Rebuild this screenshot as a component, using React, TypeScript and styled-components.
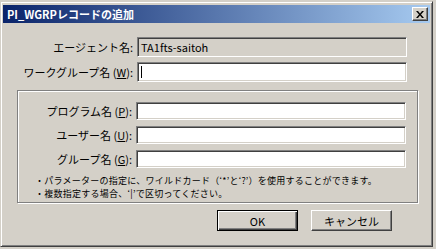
import React from 'react';
import styled, { createGlobalStyle } from 'styled-components';

const GlobalStyle = createGlobalStyle`
  html, body {
    margin: 0;
    padding: 0;
    background: #d4d0c8;
  }
  body {
    font-family: "Noto Sans CJK JP", "Liberation Sans", sans-serif;
    font-size: 11px;
    color: #000;
  }
`;

const Window = styled.div`
  box-sizing: border-box;
  width: 433px;
  height: 246px;
  margin-top: 1px;
  padding: 3px 2px 2px 2px;
  background: #d4d0c8;
  border-style: solid;
  border-width: 1px;
  border-color: #d4d0c8 #404040 #404040 #d4d0c8;
  box-shadow: inset 1px 1px #ffffff, inset -1px -1px #808080;
  display: flex;
  flex-direction: column;
`;

const TitleBar = styled.div`
  height: 18px;
  display: flex;
  align-items: center;
  justify-content: space-between;
  padding: 0 2px 0 4px;
  background: linear-gradient(to right, #0a246a, #a6caf0);
`;

const Title = styled.span`
  color: #fff;
  font-weight: bold;
  font-size: 11px;
  line-height: 18px;
`;

const CloseButton = styled.div`
  box-sizing: border-box;
  width: 16px;
  height: 14px;
  background: #d4d0c8;
  border-style: solid;
  border-width: 1px;
  border-color: #fff #404040 #404040 #fff;
  box-shadow: inset -1px -1px #808080;
  display: flex;
  align-items: center;
  justify-content: center;
`;

const Form = styled.div`
  display: flex;
  flex-direction: column;
  gap: 5px;
  margin-top: 14px;
`;

const Row = styled.div<{ $label: number; $h: number }>`
  display: grid;
  grid-template-columns: ${(p) => p.$label}px 270px;
  column-gap: 4px;
  align-items: center;
  height: ${(p) => p.$h}px;
`;

const Label = styled.label`
  text-align: right;
  white-space: nowrap;
  font-size: 11px;
  line-height: 12px;
  u {
    text-decoration: underline;
  }
`;

const Field = styled.div<{ $disabled?: boolean }>`
  box-sizing: border-box;
  height: 100%;
  background: ${(p) => (p.$disabled ? '#d4d0c8' : '#ffffff')};
  border-style: solid;
  border-width: 1px;
  border-color: #808080 #ffffff #ffffff #808080;
  box-shadow: inset 1px 1px #404040, inset -1px -1px #d4d0c8;
  padding: 0 3px;
  display: flex;
  align-items: center;
  font-size: 11px;
`;

const Caret = styled.span`
  width: 1px;
  height: 12px;
  background: #000;
`;

const GroupBox = styled.div`
  box-sizing: border-box;
  margin: 8px 0 0 14px;
  width: 401px;
  height: 113px;
  border: 1px solid #808080;
  box-shadow: inset 1px 1px #ffffff, 1px 1px #ffffff;
  padding: 11px 0 0 1px;
  display: flex;
  flex-direction: column;
  gap: 6px;
`;

const Notes = styled.div`
  margin: 0 0 0 16px;
  display: flex;
  flex-direction: column;
`;

const Note = styled.div`
  font-size: 9px;
  line-height: 13px;
  height: 13px;
  letter-spacing: 0.25px;
  white-space: nowrap;
`;

const ButtonRow = styled.div`
  display: flex;
  gap: 13px;
  margin: 7px 0 0 214px;
`;

const Button = styled.button<{ $default?: boolean }>`
  box-sizing: border-box;
  width: 81px;
  height: 21px;
  padding: 0;
  background: #d4d0c8;
  font-family: "Noto Sans CJK JP", "Liberation Sans", sans-serif;
  font-size: 11px;
  color: #000;
  border-style: solid;
  border-width: 1px;
  border-color: ${(p) => (p.$default ? '#000' : '#fff #404040 #404040 #fff')};
  box-shadow: ${(p) =>
    p.$default
      ? 'inset 1px 1px #fff, inset -1px -1px #404040, inset -2px -2px #808080'
      : 'inset -1px -1px #808080'};
`;

export default function App() {
  return (
    <>
      <GlobalStyle />
      <Window>
        <TitleBar>
          <Title>PI_WGRPレコードの追加</Title>
          <CloseButton>
            <svg width="8" height="7" viewBox="0 0 8 7">
              <path d="M0 0h2l2 2.5L6 0h2L5 3.5 8 7H6L4 4.5 2 7H0l3-3.5z" fill="#000" />
            </svg>
          </CloseButton>
        </TitleBar>
        <Form>
          <Row $label={130} $h={20}>
            <Label>エージェント名:</Label>
            <Field $disabled>TA1fts-saitoh</Field>
          </Row>
          <Row $label={130} $h={20}>
            <Label>
              ワークグループ名 (<u>W</u>):
            </Label>
            <Field>
              <Caret />
            </Field>
          </Row>
        </Form>
        <GroupBox>
          <Row $label={113} $h={18}>
            <Label>
              プログラム名 (<u>P</u>):
            </Label>
            <Field />
          </Row>
          <Row $label={113} $h={18}>
            <Label>
              ユーザー名 (<u>U</u>):
            </Label>
            <Field />
          </Row>
          <Row $label={113} $h={18}>
            <Label>
              グループ名 (<u>G</u>):
            </Label>
            <Field />
          </Row>
          <Notes>
            <Note>・パラメーターの指定に、ワイルドカード（‘*’と‘?’）を使用することができます。</Note>
            <Note>・複数指定する場合、‘|’で区切ってください。</Note>
          </Notes>
        </GroupBox>
        <ButtonRow>
          <Button $default>OK</Button>
          <Button>キャンセル</Button>
        </ButtonRow>
      </Window>
    </>
  );
}
